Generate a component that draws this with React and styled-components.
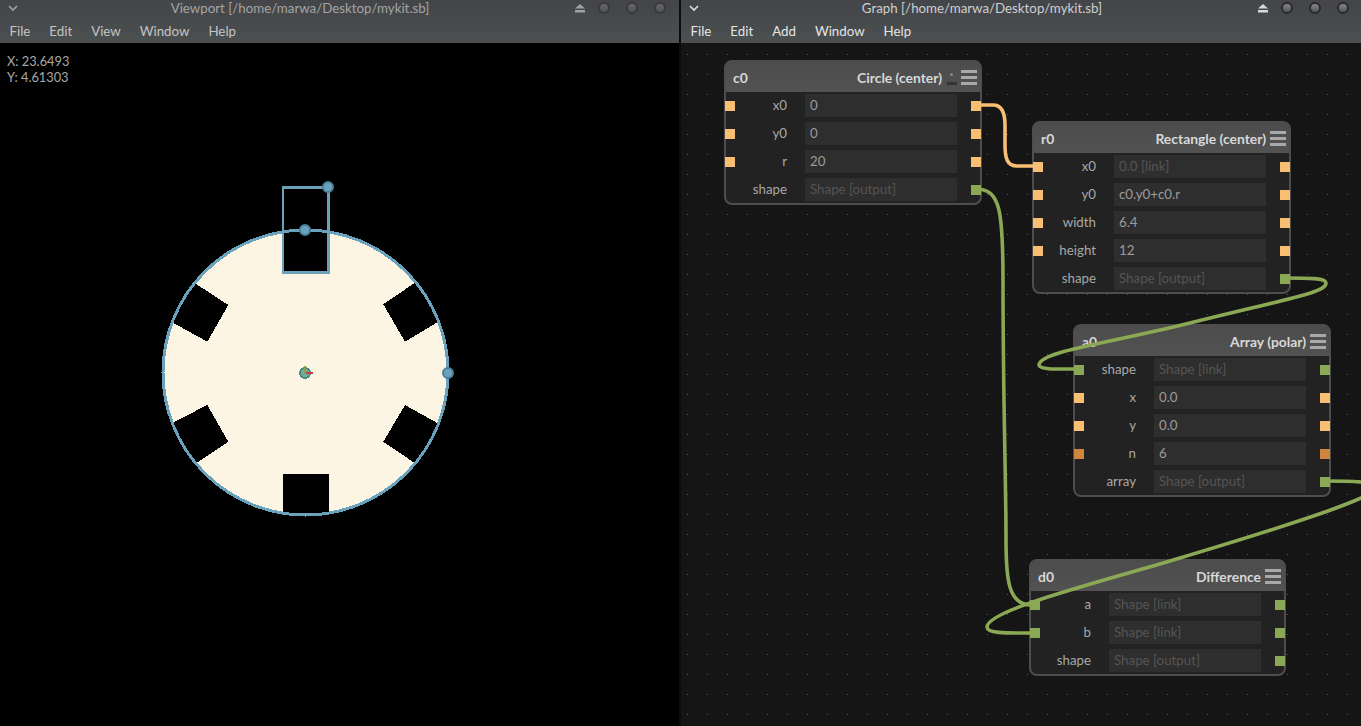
import styled, { createGlobalStyle } from "styled-components";

const GlobalStyle = createGlobalStyle`
  html, body {
    margin: 0;
    padding: 0;
    height: 100%;
    background: #000;
    overflow: hidden;
  }
  #root {
    height: 100%;
  }
`;

const Desktop = styled.div`
  display: flex;
  gap: 2px;
  width: 1361px;
  height: 726px;
  background: #0c0c0c;
  font-family: "Lato", "Noto Sans", sans-serif;
  font-size: 13.3px;
`;

const Window = styled.section`
  display: flex;
  flex-direction: column;
  width: ${(p) => p.$width}px;
  flex: none;
`;

const Chrome = styled.header`
  flex: none;
  height: 43px;
  background: linear-gradient(#434549, #4c5050);
  color: ${(p) => (p.$focused ? "#e4e4e4" : "#c4c4c4")};
`;

const TitleBar = styled.div`
  display: flex;
  align-items: center;
  height: 16px;
`;

const Chevron = styled.svg`
  flex: none;
  width: 26px;
  height: 16px;
`;

const Title = styled.div`
  flex: 1;
  text-align: center;
  color: ${(p) => (p.$focused ? "#cfcfcf" : "#a4a4a4")};
  line-height: 16px;
`;

const Controls = styled.div`
  display: flex;
  align-items: center;
  gap: 16px;
  padding-right: ${(p) => p.$inset}px;
`;

const Eject = styled.svg`
  width: 12px;
  height: 10px;
  margin-right: -4px;
`;

const Dot = styled.span`
  width: 8px;
  height: 8px;
  border-radius: 50%;
  border: 2px solid ${(p) => (p.$focused ? "#2a2a2c" : "#38393b")};
  background: ${(p) =>
    p.$focused
      ? "linear-gradient(#888, #555)"
      : "linear-gradient(#686868, #505050)"};
`;

const MenuBar = styled.nav`
  display: flex;
  height: 27px;
  padding: 6px 0 0;
  box-sizing: border-box;
`;

const MenuItem = styled.span`
  padding: 0 9.5px;
  line-height: 18px;
`;

const ViewportCanvas = styled.main`
  position: relative;
  flex: 1;
  background: #000;
`;

const Readout = styled.div`
  position: absolute;
  left: 7px;
  top: 10px;
  color: #a8a8a8;
  font-size: 12.8px;
  line-height: 16px;
`;

const Scene = styled.svg`
  display: block;
  width: 100%;
  height: 100%;
`;

const GraphCanvas = styled.main`
  position: relative;
  flex: 1;
  background-color: #151515;
  background-image: radial-gradient(circle at 10.5px 10.5px, #5a5a5a 0.6px, transparent 0.9px);
  background-size: 20px 20px;
  background-position: -4px 1px;
`;

const Node = styled.article`
  position: absolute;
  left: ${(p) => p.$x}px;
  top: ${(p) => p.$y}px;
  width: ${(p) => p.$width}px;
  box-sizing: border-box;
  border: 2px solid #4d4d4d;
  border-radius: 8px;
  background: #222;
  padding-bottom: 2px;
`;

const NodeHeader = styled.div`
  display: flex;
  align-items: center;
  height: 31px;
  margin-top: -1px;
  margin-bottom: 2px;
  padding: 1px 3px 0 7px;
  box-sizing: border-box;
  background: linear-gradient(#4c4c4c, #525252);
  border-radius: 6px 6px 0 0;
  font-size: 13.9px;
`;

const NodeName = styled.span`
  flex: 1;
  color: #d8d8d8;
  font-weight: 700;
`;

const NodeType = styled.span`
  color: #d8d8d8;
  font-weight: 700;
`;

const Hamburger = styled.span`
  display: flex;
  flex-direction: column;
  gap: 3px;
  width: 16px;
  margin-left: 4px;
  & > i {
    display: block;
    height: 3px;
    background: #a9a9a9;
  }
`;

const Hidden = styled.span`
  position: relative;
  width: 10px;
  height: 15px;
  margin-left: 5px;
  &::before {
    content: "";
    position: absolute;
    left: 3px;
    top: 3px;
    width: 3px;
    height: 3px;
    border-radius: 50%;
    background: #8a8a8a;
  }
  &::after {
    content: "";
    position: absolute;
    left: 0;
    bottom: 0;
    width: 10px;
    height: 3px;
    background: #333;
  }
`;

const Rows = styled.div`
  display: flex;
  flex-direction: column;
  gap: 5px;
`;

const Row = styled.div`
  display: flex;
  align-items: center;
  height: 23px;
  margin: 0 -1px;
`;

const PORT_COLOURS = {
  number: "#f8bf73",
  shape: "#8ba855",
  int: "#d0853f",
};

const Port = styled.span`
  flex: none;
  width: 10px;
  height: 10px;
  background: ${(p) => PORT_COLOURS[p.$kind]};
`;

const PortGap = styled.span`
  flex: none;
  width: 10px;
`;

const Label = styled.label`
  flex: 1;
  text-align: right;
  color: #a8a8a8;
  margin-right: 18px;
  padding-bottom: 2px;
`;

const Field = styled.div`
  flex: none;
  width: 152px;
  height: 23px;
  margin-right: 14px;
  padding-left: 5px;
  box-sizing: border-box;
  background: #2e2e2e;
  line-height: 23px;
  color: ${(p) => (p.$dim ? "#555" : "#9c9c9c")};
`;

const Wires = styled.svg`
  position: absolute;
  inset: 0;
  width: 100%;
  height: 100%;
  pointer-events: none;
`;

const nodes = [
  {
    id: "c0",
    type: "Circle (center)",
    x: 43,
    y: 17,
    width: 258,
    hidden: true,
    rows: [
      { label: "x0", value: "0", kind: "number" },
      { label: "y0", value: "0", kind: "number" },
      { label: "r", value: "20", kind: "number" },
      { label: "shape", value: "Shape [output]", kind: "shape", dim: true, output: true },
    ],
  },
  {
    id: "r0",
    type: "Rectangle (center)",
    x: 351,
    y: 78,
    width: 259,
    rows: [
      { label: "x0", value: "0.0 [link]", kind: "number", dim: true },
      { label: "y0", value: "c0.y0+c0.r", kind: "number" },
      { label: "width", value: "6.4", kind: "number" },
      { label: "height", value: "12", kind: "number" },
      { label: "shape", value: "Shape [output]", kind: "shape", dim: true, output: true },
    ],
  },
  {
    id: "a0",
    type: "Array (polar)",
    x: 392,
    y: 281,
    width: 258,
    rows: [
      { label: "shape", value: "Shape [link]", kind: "shape", dim: true },
      { label: "x", value: "0.0", kind: "number" },
      { label: "y", value: "0.0", kind: "number" },
      { label: "n", value: "6", kind: "int" },
      { label: "array", value: "Shape [output]", kind: "shape", dim: true, output: true },
    ],
  },
  {
    id: "d0",
    type: "Difference",
    x: 348,
    y: 516,
    width: 257,
    rows: [
      { label: "a", value: "Shape [link]", kind: "shape", dim: true },
      { label: "b", value: "Shape [link]", kind: "shape", dim: true },
      { label: "shape", value: "Shape [output]", kind: "shape", dim: true, output: true },
    ],
  },
];

// wire coordinates are relative to the graph canvas (681, 43)
const wires = [
  {
    colour: "#f8bf73",
    d: "M295 62 H312 C321 62 324 70 324 82 V102 C324 115 326 123 336 123 H355",
  },
  {
    colour: "#8ba855",
    d: "M295 146 C319 146 322 167 322 237 C322 357 325 437 325 497 C325 535 327 562 350 562",
  },
  {
    colour: "#8ba855",
    d: "M604 235 C629 235 645 235 645 240 C645 249 619 253 509 280 C419 302 358 309 358 322 C358 327 379 326 397 326",
  },
  {
    colour: "#8ba855",
    d: "M644 438 C669 438 694 438 694 445 C694 452 659 467 499 515 C419 539 306 567 306 584 C306 591 329 590 353 590",
  },
];

const CX = 305.5;
const CY = 372.5;

// the cut-outs as they land on the pixel grid, not quite regular
const NOTCHES = [
  "283,180 328,180 328,272 283,272",
  "190,280 228.3,305 207.3,341.7 168,320",
  "419,280 383.3,304.3 405,341.7 441,320",
  "168,425 207.3,405 228.3,441.7 192,466",
  "441,425 405,405 383.3,441.7 419,466",
  "283,474 329,474 329,520 283,520",
];

function Handle({ x, y }) {
  return <circle cx={x} cy={y} r="5" fill="#6ba2bb" stroke="#4c7f99" strokeWidth="2" />;
}

function ViewportScene() {
  return (
    <Scene viewBox="0 43 679 683">
      <circle cx={CX} cy={CY} r="142.5" fill="#fcf5e4" shapeRendering="crispEdges" />
      {NOTCHES.map((points) => (
        <polygon key={points} points={points} fill="#000" shapeRendering="crispEdges" />
      ))}
      <circle cx={CX} cy={CY} r="142.5" fill="none" stroke="#6ba2bb" strokeWidth="3" shapeRendering="crispEdges" />
      <rect
        x="283"
        y="187.3"
        width="45.4"
        height="85"
        fill="none"
        stroke="#6ba2bb"
        strokeWidth="2.6"
        shapeRendering="crispEdges"
      />
      <Handle x={328} y={187} />
      <Handle x={305} y={230} />
      <Handle x={448} y={373} />
      <circle cx="305" cy="373" r="5" fill="#6fae9f" stroke="#4f8a84" strokeWidth="2" shapeRendering="crispEdges" />
      <path d="M305 373 V366" stroke="#8f9e3f" strokeWidth="2" shapeRendering="crispEdges" />
      <path d="M306 373 H313" stroke="#c0404a" strokeWidth="2" shapeRendering="crispEdges" />
    </Scene>
  );
}

function GraphNode({ node }) {
  return (
    <Node $x={node.x} $y={node.y} $width={node.width}>
      <NodeHeader>
        <NodeName>{node.id}</NodeName>
        <NodeType>{node.type}</NodeType>
        {node.hidden && <Hidden />}
        <Hamburger>
          <i />
          <i />
          <i />
        </Hamburger>
      </NodeHeader>
      <Rows>
        {node.rows.map((row) => (
          <Row key={row.label}>
            {row.output ? <PortGap /> : <Port $kind={row.kind} />}
            <Label>{row.label}</Label>
            <Field $dim={row.dim}>{row.value}</Field>
            <Port $kind={row.kind} />
          </Row>
        ))}
      </Rows>
    </Node>
  );
}

function WindowChrome({ title, menu, focused, inset }) {
  return (
    <Chrome $focused={focused}>
      <TitleBar>
        <Chevron viewBox="0 0 26 16">
          <path
            d="M9 6 L13 10 L17 6"
            fill="none"
            stroke={focused ? "#e0e0e0" : "#a0a0a0"}
            strokeWidth="1.6"
          />
        </Chevron>
        <Title $focused={focused}>{title}</Title>
        <Controls $inset={inset}>
          <Eject viewBox="0 0 12 10">
            <path d="M6 1 L11 5.5 H1 Z M1 7 H11 V9.5 H1 Z" fill={focused ? "#d8d8d8" : "#a0a0a0"} />
          </Eject>
          <Dot $focused={focused} />
          <Dot $focused={focused} />
          <Dot $focused={focused} />
        </Controls>
      </TitleBar>
      <MenuBar>
        {menu.map((item) => (
          <MenuItem key={item}>{item}</MenuItem>
        ))}
      </MenuBar>
    </Chrome>
  );
}

export default function App() {
  return (
    <>
      <GlobalStyle />
      <Desktop>
        <Window $width={679}>
          <WindowChrome
            title="Viewport [/home/marwa/Desktop/mykit.sb]"
            menu={["File", "Edit", "View", "Window", "Help"]}
            inset={13}
          />
          <ViewportCanvas>
            <ViewportScene />
            <Readout>
              <div>X: 23.6493</div>
              <div>Y: 4.61303</div>
            </Readout>
          </ViewportCanvas>
        </Window>
        <Window $width={680}>
          <WindowChrome
            title="Graph [/home/marwa/Desktop/mykit.sb]"
            menu={["File", "Edit", "Add", "Window", "Help"]}
            focused
            inset={12}
          />
          <GraphCanvas>
            {nodes.map((node) => (
              <GraphNode key={node.id} node={node} />
            ))}
            <Wires>
              {wires.map((wire) => (
                <path key={wire.d} d={wire.d} fill="none" stroke={wire.colour} strokeWidth="3.6" />
              ))}
            </Wires>
          </GraphCanvas>
        </Window>
      </Desktop>
    </>
  );
}
